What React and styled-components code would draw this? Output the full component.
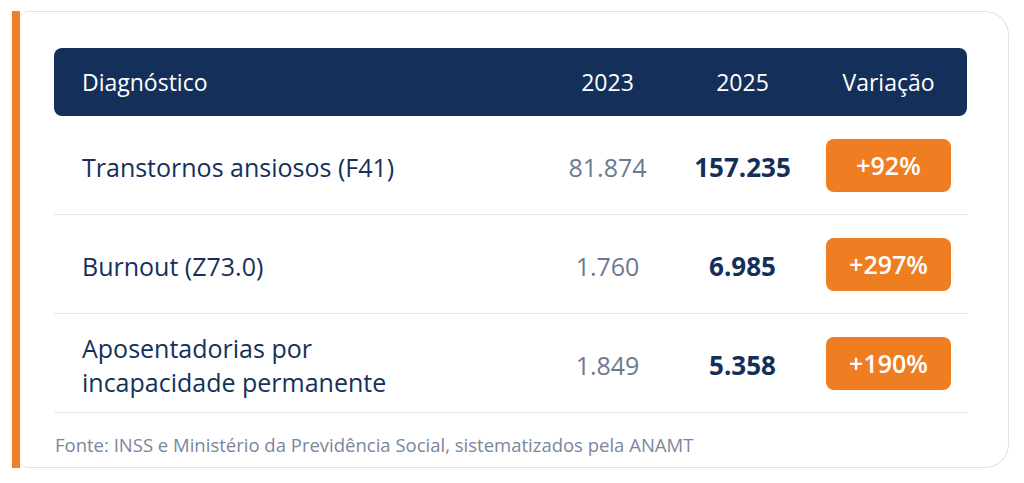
import { createGlobalStyle, styled } from 'styled-components';

const GlobalStyle = createGlobalStyle`
  * { box-sizing: border-box; }
  body {
    margin: 0;
    background: #ffffff;
    font-family: "Open Sans", "Noto Sans", sans-serif;
  }
`;

const rows = [
  { label: 'Transtornos ansiosos (F41)', before: '81.874', after: '157.235', change: '+92%' },
  { label: 'Burnout (Z73.0)', before: '1.760', after: '6.985', change: '+297%' },
  { label: ['Aposentadorias por', 'incapacidade permanente'], before: '1.849', after: '5.358', change: '+190%' },
];

export default function App() {
  return (
    <>
      <GlobalStyle />
      <Page>
        <Card>
          <Accent />
          <Body>
            <Table>
              <HeadRow>
                <HeadCell $first>Diagnóstico</HeadCell>
                <HeadCell>2023</HeadCell>
                <HeadCell>2025</HeadCell>
                <HeadCell>Variação</HeadCell>
              </HeadRow>
              {rows.map((r, i) => (
                <Row key={i}>
                  <Label>
                    {Array.isArray(r.label)
                      ? r.label.map((l, j) => <span key={j}>{l}</span>)
                      : r.label}
                  </Label>
                  <Before>{r.before}</Before>
                  <After>{r.after}</After>
                  <BadgeCell>
                    <Badge>{r.change}</Badge>
                  </BadgeCell>
                </Row>
              ))}
            </Table>
            <Source>Fonte: INSS e Ministério da Previdência Social, sistematizados pela ANAMT</Source>
          </Body>
        </Card>
      </Page>
    </>
  );
}

const Page = styled.div`
  padding: 11px 15px 15px 12px;
`;

const Card = styled.div`
  display: flex;
  height: 457px;
`;

const Accent = styled.div`
  width: 8px;
  background: #f08024;
  flex-shrink: 0;
`;

const Body = styled.div`
  flex: 1;
  border: 1px solid #dde3ea;
  border-left: none;
  border-radius: 8px 24px 24px 8px;
  padding: 36px 41px 0 34px;
  display: flex;
  flex-direction: column;
`;

const Table = styled.div`
  display: flex;
  flex-direction: column;
`;

const grid = `
  display: grid;
  grid-template-columns: 1fr 135px 135px 157px;
  align-items: center;
`;

const HeadRow = styled.div`
  ${grid}
  height: 68px;
  background: #14305a;
  border-radius: 8px;
`;

const HeadCell = styled.div`
  color: #ffffff;
  font-size: 23px;
  text-align: ${(p) => (p.$first ? 'left' : 'center')};
  padding-left: ${(p) => (p.$first ? '28px' : '0')};
`;

const Row = styled.div`
  ${grid}
  height: 99px;
  padding-top: 4px;
  border-bottom: 1px solid #e3e8ee;
`;

const Label = styled.div`
  padding-left: 28px;
  color: #14305a;
  font-size: 25px;
  line-height: 34px;
  display: flex;
  flex-direction: column;
`;

const Before = styled.div`
  text-align: center;
  color: #6b7a90;
  font-size: 25px;
`;

const After = styled.div`
  text-align: center;
  color: #14305a;
  font-size: 26px;
  font-weight: 700;
`;

const BadgeCell = styled.div`
  display: flex;
  justify-content: center;
  margin-top: -4px;
`;

const Badge = styled.div`
  width: 125px;
  height: 53px;
  border-radius: 8px;
  background: #ef7d22;
  color: #ffffff;
  font-size: 25px;
  font-weight: 600;
  display: flex;
  align-items: center;
  justify-content: center;
`;

const Source = styled.div`
  margin-top: 19px;
  padding-left: 1px;
  color: #7a869a;
  font-size: 18.5px;
`;
